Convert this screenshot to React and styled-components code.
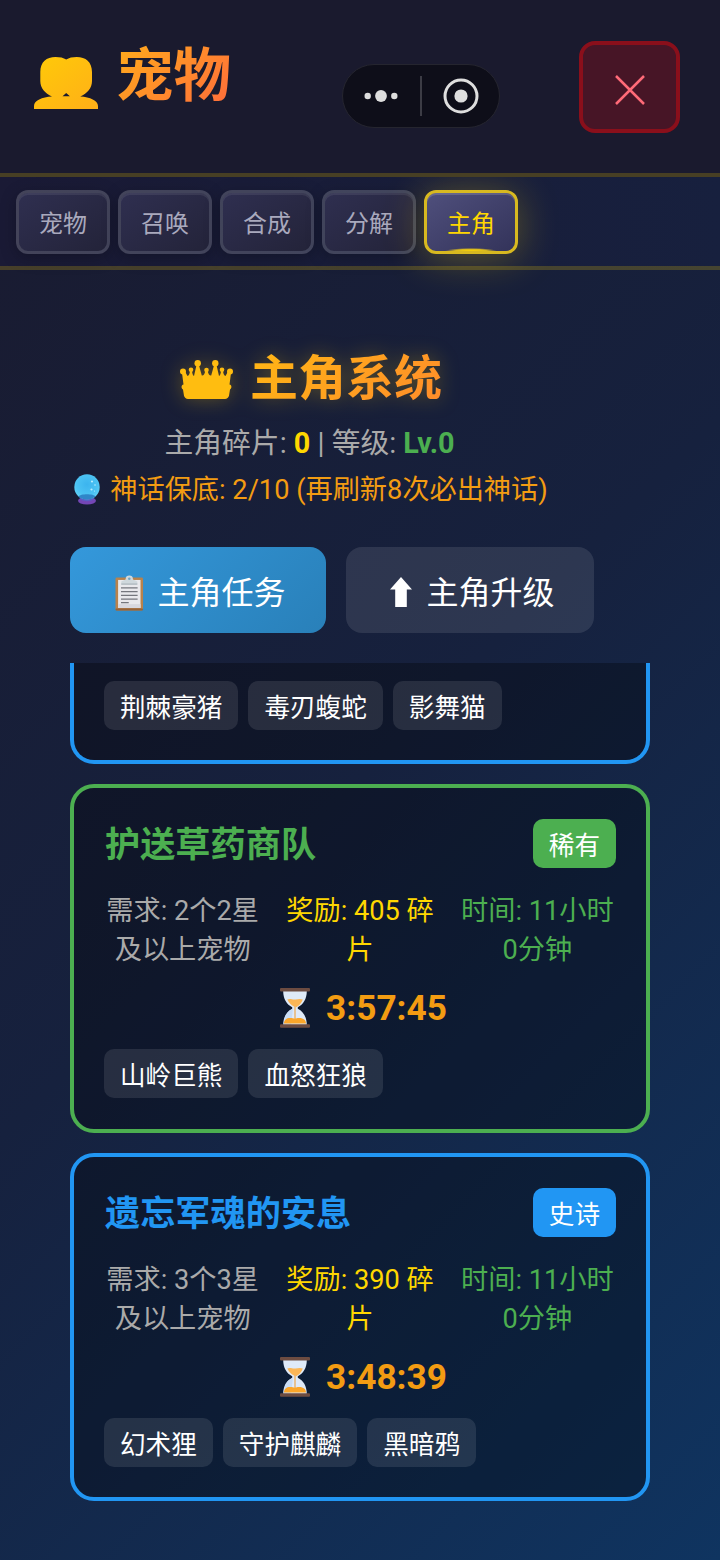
import { useState } from 'react';
import styled, { createGlobalStyle, css } from 'styled-components';

const TABS = ['宠物', '召唤', '合成', '分解', '主角'];

const RARITY = {
  rare: { label: '稀有', color: '#4caf50' },
  epic: { label: '史诗', color: '#2196f3' },
};

const QUESTS = [
  {
    id: 2,
    name: '护送草药商队',
    rarity: 'rare',
    need: '需求: 2个2星及以上宠物',
    reward: '奖励: 405 碎片',
    time: '时间: 11小时0分钟',
    left: '3:57:45',
    pets: ['山岭巨熊', '血怒狂狼'],
  },
  {
    id: 3,
    name: '遗忘军魂的安息',
    rarity: 'epic',
    need: '需求: 3个3星及以上宠物',
    reward: '奖励: 390 碎片',
    time: '时间: 11小时0分钟',
    left: '3:48:39',
    pets: ['幻术狸', '守护麒麟', '黑暗鸦'],
  },
];

function PeopleIcon() {
  return (
    <svg width="64" height="52" viewBox="0 0 64 52">
      <defs>
        <linearGradient id="people" x1="0" y1="0" x2="1" y2="1">
          <stop offset="0" stopColor="#ffca08" />
          <stop offset="1" stopColor="#ffaf18" />
        </linearGradient>
      </defs>
      <path
        fill="url(#people)"
        fillRule="evenodd"
        d="M0 52v-3C0 43.500 8 40 18 39.500 11 36.500 6.300 31 6.300 24V15C6.300 5 12.500 0 21.500 0c4.500 0 8 .800 10.700 2.600C35 .800 38.500 0 42.700 0c9 0 15.300 5 15.300 15v9c0 7-4.700 12.500-11.700 15.500C56 40 64 43.500 64 49V52ZM28.500 39.300h7.400L32.200 36Z"
      />
    </svg>
  );
}

function CrownIcon() {
  return (
    <svg width="53" height="39" viewBox="0 0 53 39">
      <g fill="#ffbd10">
        <circle cx="3" cy="11.500" r="3" />
        <circle cx="17.700" cy="3.200" r="3.200" />
        <circle cx="35.300" cy="3.200" r="3.200" />
        <circle cx="50" cy="11.500" r="3" />
        <circle cx="11" cy="9.800" r="2.300" />
        <circle cx="26.500" cy="10" r="2.300" />
        <circle cx="42" cy="9.800" r="2.300" />
        <path d="M2 13l3-1.500L7.500 16q2-.500 2.500-5h2q.500 4.500 2 5L16.500 5h2.400l2.900 10.500q2.400.500 3.500-4.500h2.400q1.100 5 3.500 4.500L34.100 5h2.400L39 16q1.500-.500 2-5h2q.500 4.500 2.500 5L48 11.500 51 13l-1.500 11.500c2.500.500 2.500 4 .500 5l-1 6.300c-.500 2-2 3.200-4 3.200H8c-2 0-3.500-1.200-4-3.200l-1-6.300c-2-1-2-4.500.500-5Z" />
      </g>
    </svg>
  );
}

function CrystalBallIcon() {
  return (
    <svg width="26" height="31" viewBox="0 0 26 31">
      <defs>
        <radialGradient id="ball" cx=".5" cy=".4" r=".6">
          <stop offset="0" stopColor="#3cb4ee" />
          <stop offset=".7" stopColor="#4cc3f3" />
          <stop offset="1" stopColor="#62d4f6" />
        </radialGradient>
      </defs>
      <ellipse cx="13" cy="26.800" rx="9" ry="3.800" fill="#7446b5" />
      <circle cx="13" cy="13" r="12.700" fill="url(#ball)" />
      <path d="M4.500 22.500C6 19.500 20 19.500 21.500 22.500a13 13 0 0 1-17 0Z" fill="#2f86c8" />
      <path d="M6 24.500c3 2.500 11 2.500 14 0" stroke="#5860c4" strokeWidth="1.500" fill="none" />
      <g fill="#b9ecfd">
        <circle cx="18" cy="7.500" r="1.100" />
        <circle cx="21" cy="11" r=".8" />
        <circle cx="17.500" cy="15.500" r="1.100" />
        <circle cx="20.500" cy="17" r=".6" />
      </g>
    </svg>
  );
}

function ClipboardIcon() {
  return (
    <svg width="29" height="36" viewBox="0 0 30 37">
      <rect x=".5" y="2.500" width="28.500" height="34" rx="1.500" fill="#b8824c" />
      <rect x=".5" y="34.500" width="28.500" height="2" rx="1" fill="#94633a" />
      <path d="M3.200 5h23.200v29H3.200Z" fill="#e9e9ec" />
      <path d="M3.200 30h23.200v4H3.200Z" fill="#d8d8de" />
      <path d="M6.500 10V6.500L11 4.500C11 1.500 12.500.500 14.800.500s3.800 1 3.800 4l4.500 2V10Z" fill="#cfd8dc" />
      <path d="M6.500 8.500h16.600V10H6.500Z" fill="#b3bcc1" />
      <circle cx="14.800" cy="3.800" r="1.300" fill="#6fa5c8" />
      <path
        d="M6.200 13.300h17.200M6.200 17.200h17.200M6.200 21h17.200M6.200 24.800h17.200M6.200 28.500h8"
        stroke="#75777d"
        strokeWidth="1.300"
      />
    </svg>
  );
}

function ArrowUpIcon() {
  return (
    <svg width="22" height="30" viewBox="0 0 22 30">
      <path d="M11 0 22 12.600h-5.200V30H5.200V12.600H0Z" fill="#fff" />
    </svg>
  );
}

function HourglassIcon() {
  return (
    <svg width="30" height="40" viewBox="0 0 30 40">
      <path
        d="M3.200 3h23.600c0 8-3.500 13.500-9 16.200v1.600c5.500 2.700 9 8.200 9 16.200H3.200c0-8 3.500-13.500 9-16.200v-1.600C6.700 16.500 3.200 11 3.200 3Z"
        fill="#dfeaf8"
      />
      <path d="M4.500 31C6 25 9 22.500 13 21l-2 16H4Z" fill="#c8dcf5" />
      <path d="M7.300 11.500c3-1.500 5 .500 8 0s5-1 7.500 0c-1.300 3.700-3.700 6.200-7 8-4-1.800-6.800-4.300-8.500-8Z" fill="#fbb656" />
      <path d="M15 18v14" stroke="#e9b878" strokeWidth="1.600" />
      <path d="M4 35.500c0-3.500 2.500-5.500 6-5.500 3 0 4 1 6 .500 6-1.500 10 1 10 5Z" fill="#fba62a" />
      <rect width="30" height="3.600" rx="1" fill="#6d4c41" />
      <rect y="36.200" width="30" height="3.600" rx="1" fill="#6d4c41" />
    </svg>
  );
}

function PetTags({ pets }) {
  return (
    <Tags>
      {pets.map((pet) => (
        <Tag key={pet}>{pet}</Tag>
      ))}
    </Tags>
  );
}

function QuestCard({ quest }) {
  const { label, color } = RARITY[quest.rarity];
  return (
    <Card $color={color}>
      <CardHead>
        <QuestName $color={color}>{quest.name}</QuestName>
        <Badge $color={color}>{label}</Badge>
      </CardHead>
      <InfoGrid>
        <Info $color="#aaa">{quest.need}</Info>
        <Info $color="#ffd700">{quest.reward}</Info>
        <Info $color="#4caf50">{quest.time}</Info>
      </InfoGrid>
      <Timer>
        <HourglassIcon />
        {quest.left}
      </Timer>
      <PetTags pets={quest.pets} />
    </Card>
  );
}

export default function App() {
  const [tab, setTab] = useState('主角');

  return (
    <Page>
      <GlobalStyle />
      <Header>
        <Title>
          <PeopleIcon />
          <TitleText>宠物</TitleText>
        </Title>
        <CloseButton aria-label="close">
          <svg width="30" height="30" viewBox="0 0 30 30" stroke="#ff6b78" strokeWidth="2.5">
            <path d="M1 1 29 29M29 1 1 29" />
          </svg>
        </CloseButton>
        <Capsule>
          <svg width="36" height="14" viewBox="0 0 36 14" fill="#dedede">
            <circle cx="4.700" cy="7" r="3.200" />
            <circle cx="18" cy="7" r="5.900" />
            <circle cx="31.300" cy="7" r="3.200" />
          </svg>
          <Divider />
          <svg width="36" height="36" viewBox="0 0 36 36">
            <circle cx="18" cy="18" r="16" fill="none" stroke="#dedede" strokeWidth="3" />
            <circle cx="18" cy="18" r="6.600" fill="#dedede" />
          </svg>
        </Capsule>
      </Header>

      <TabBar>
        {TABS.map((name) => (
          <Tab key={name} $active={name === tab} onClick={() => setTab(name)}>
            {name}
          </Tab>
        ))}
      </TabBar>

      <Content>
        <Summary>
          <SystemTitle>
            <CrownIcon />
            <SystemText>主角系统</SystemText>
          </SystemTitle>
          <Stats>
            主角碎片: <Strong $color="#ffd700">0</Strong> | 等级: <Strong $color="#4caf50">Lv.0</Strong>
          </Stats>
          <Pity>
            <CrystalBallIcon />
            <span>神话保底: 2/10 (再刷新8次必出神话)</span>
          </Pity>
        </Summary>

        <Actions>
          <ActionButton $primary>
            <ClipboardIcon />
            <span>主角任务</span>
          </ActionButton>
          <ActionButton>
            <ArrowUpIcon />
            <span>主角升级</span>
          </ActionButton>
        </Actions>

        <QuestList>
          <Card $color="#2196f3" $cut>
            <PetTags pets={['荆棘豪猪', '毒刃蝮蛇', '影舞猫']} />
          </Card>
          {QUESTS.map((quest) => (
            <QuestCard key={quest.id} quest={quest} />
          ))}
        </QuestList>
      </Content>
    </Page>
  );
}

const GlobalStyle = createGlobalStyle`
  * {
    box-sizing: border-box;
  }
  body {
    margin: 0;
    background: #1a1a2e;
    font-family: Roboto, "Noto Sans CJK SC", sans-serif;
    color: #fff;
  }
  button {
    font-family: inherit;
    cursor: pointer;
  }
  svg {
    flex-shrink: 0;
  }
`;

const Page = styled.div`
  width: 720px;
  height: 1560px;
  overflow: hidden;
  background: linear-gradient(135deg, #1a1a2e 0%, #16213e 50%, #0f3460 100%);
`;

const Header = styled.header`
  position: relative;
  display: flex;
  justify-content: space-between;
  align-items: flex-start;
  height: 177px;
  padding: 41px 40px 40px 34px;
  background: #1a1a2e;
  border-bottom: 4px solid rgba(255, 215, 0, 0.2);
`;

const Title = styled.div`
  display: flex;
  align-items: flex-end;
  gap: 18px;
  height: 68px;
`;

const TitleText = styled.h1`
  margin: 0;
  padding-top: 6px;
  font-size: 57.6px;
  line-height: 64px;
  font-weight: 700;
  background: linear-gradient(135deg, #ffae1a, #ff6b3b);
  -webkit-background-clip: text;
  color: transparent;
`;

const CloseButton = styled.button`
  display: flex;
  align-items: center;
  justify-content: center;
  width: 101px;
  height: 92px;
  padding: 6px 0 0;
  border: 4px solid #8a0f1b;
  border-radius: 16px;
  background: #471526;
`;

/* 小程序右上角胶囊，浮在页面之上 */
const Capsule = styled.div`
  position: absolute;
  top: 64px;
  left: 342px;
  display: flex;
  align-items: center;
  justify-content: space-between;
  width: 158px;
  height: 64px;
  padding: 0 20px 0 20px;
  border: 1px solid #25252f;
  border-radius: 32px;
  background: #0e0e19;
`;

const Divider = styled.div`
  width: 2px;
  height: 40px;
  background: #3c3c45;
`;

const TabBar = styled.nav`
  display: flex;
  gap: 8px;
  height: 93px;
  padding: 12.5px 16px;
  background: linear-gradient(90deg, #1a1a35, #17203e);
  border-bottom: 4px solid rgba(255, 215, 0, 0.2);
`;

const Tab = styled.button`
  width: 94px;
  height: 64.5px;
  padding: 0;
  border: 3px solid rgba(255, 255, 255, 0.18);
  border-radius: 12px;
  background: linear-gradient(145deg, #2f2f50, #232339);
  background-clip: padding-box;
  box-shadow: 0 4px 16px rgba(0, 0, 0, 0.25), inset 0 2px 0 rgba(255, 255, 255, 0.08);
  font-size: 24px;
  color: #a9a9bd;

  ${({ $active }) =>
    $active &&
    css`
      border-color: #d8b920;
      background: radial-gradient(ellipse 26px 3px at 50% 100%, #ffd700 0%, #d8b920 60%, transparent 100%),
        linear-gradient(145deg, #4f4f7c, #33335a);
      box-shadow: 0 4px 40px rgba(255, 215, 0, 0.3), inset 0 2px 0 rgba(255, 255, 255, 0.15);
      color: #ffd700;
    `}
`;

const Content = styled.main`
  padding: 76px 70px 0;
`;

const Summary = styled.section`
  display: flex;
  flex-direction: column;
  align-items: center;
  width: 482px;
`;

const SystemTitle = styled.div`
  display: flex;
  align-items: center;
  gap: 17px;
  height: 66px;
  filter: drop-shadow(0 0 10px rgba(255, 200, 0, 0.3));
`;

const SystemText = styled.h2`
  margin: 0;
  font-size: 48px;
  line-height: 66px;
  font-weight: 700;
  background: linear-gradient(135deg, #ffb814, #ff8a2b);
  -webkit-background-clip: text;
  color: transparent;
`;

const Stats = styled.p`
  margin: 8px 0 0;
  padding-right: 3px;
  font-size: 28.8px;
  line-height: 46px;
  color: #aaa;
`;

const Strong = styled.b`
  color: ${({ $color }) => $color};
`;

const Pity = styled.p`
  display: flex;
  align-items: center;
  gap: 10px;
  margin: 0;
  font-size: 27.2px;
  line-height: 46px;
  color: #f39c12;
  white-space: nowrap;

  span {
    padding-top: 2px;
    line-height: 44px;
  }
`;

const Actions = styled.div`
  display: flex;
  gap: 20px;
  margin-top: 34.6px;
`;

const ActionButton = styled.button`
  display: flex;
  align-items: center;
  justify-content: center;
  gap: ${({ $primary }) => ($primary ? '13px' : '14px')};
  width: ${({ $primary }) => ($primary ? '256px' : '248px')};
  height: 86.4px;
  padding: 4px 0 0 5px;
  border: none;
  border-radius: 16px;
  background: ${({ $primary }) =>
    $primary ? 'linear-gradient(135deg, #3498db, #2980b9)' : 'rgba(255, 255, 255, 0.1)'};
  font-size: 32px;
  color: #fff;

  svg {
    margin-top: ${({ $primary }) => ($primary ? '3px' : '0')};
  }

  span {
    margin-top: -4px;
  }
`;

const QuestList = styled.section`
  display: flex;
  flex-direction: column;
  gap: 20px;
  margin-top: 30px;
`;

const Card = styled.article`
  height: 348.6px;
  padding: 30px;
  border: 4px solid ${({ $color }) => $color};
  border-radius: 24px;
  background: rgba(0, 0, 0, 0.3);
  background-clip: padding-box;

  ${({ $cut }) =>
    $cut &&
    css`
      height: 101px;
      padding-top: 18px;
      border-top: none;
      border-radius: 0 0 24px 24px;
    `}
`;

const CardHead = styled.div`
  display: flex;
  align-items: flex-end;
  justify-content: space-between;
  height: 50px;
`;

const QuestName = styled.h3`
  margin: 0;
  padding: 5px 0 0 1px;
  font-size: 35.2px;
  line-height: 45px;
  font-weight: 700;
  color: ${({ $color }) => $color};
`;

const Badge = styled.span`
  padding: 5px 16px 0;
  border-radius: 10px;
  background: ${({ $color }) => $color};
  font-size: 25.6px;
  line-height: 44px;
`;

const InfoGrid = styled.div`
  display: grid;
  grid-template-columns: repeat(3, 1fr);
  gap: 20px;
  margin-top: 24px;
`;

const Info = styled.p`
  margin: 0;
  font-size: 27.2px;
  line-height: 39px;
  text-align: center;
  color: ${({ $color }) => $color};
`;

const Timer = styled.div`
  display: flex;
  align-items: center;
  justify-content: center;
  gap: 16px;
  margin: 17px 0 20px;
  height: 42px;
  padding-left: 7px;
  font-size: 35.2px;
  font-weight: 700;
  color: #f39c12;
`;

const Tags = styled.div`
  display: flex;
  gap: 10px;
`;

const Tag = styled.span`
  padding: 5px 16px 0;
  border-radius: 10px;
  background: rgba(255, 255, 255, 0.1);
  font-size: 25.6px;
  line-height: 44px;
`;
